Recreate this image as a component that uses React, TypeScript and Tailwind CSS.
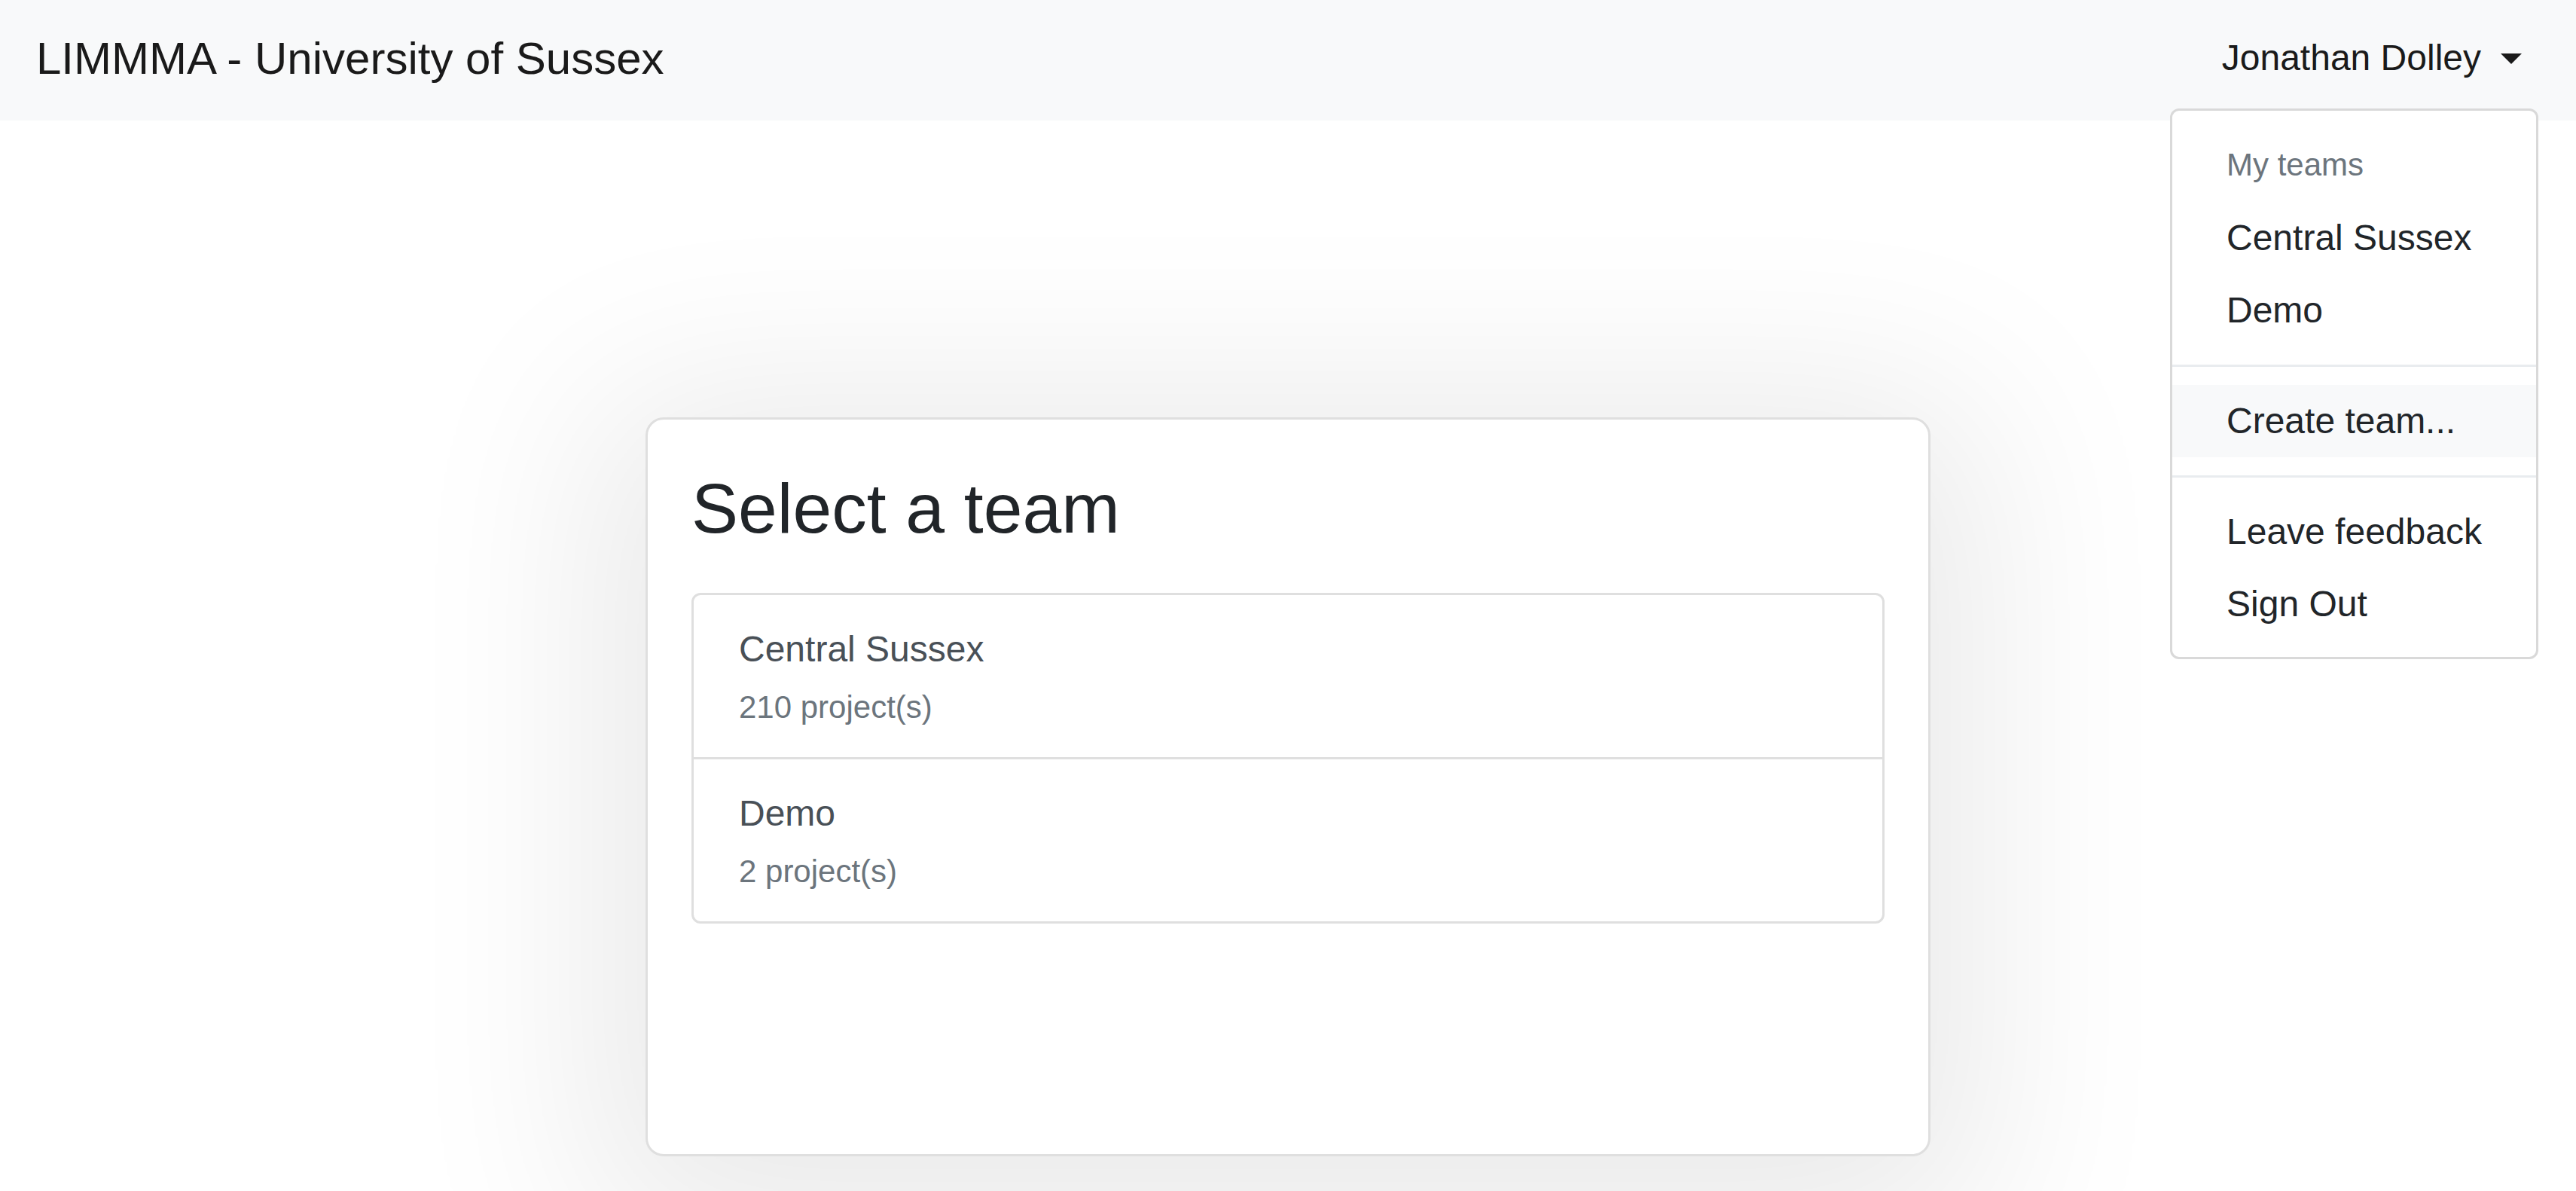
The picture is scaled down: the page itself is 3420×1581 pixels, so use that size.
import React from "react";

const teams = [
  { name: "Central Sussex", projects: 210 },
  { name: "Demo", projects: 2 },
];

function Caret() {
  return (
    <span className="inline-block w-0 h-0 border-x-[14px] border-x-transparent border-t-[14px] border-t-[#1a1a1a] ml-[26px] mt-[2px]" />
  );
}

function DropdownMenu() {
  return (
    <div className="absolute top-[144px] right-[50px] w-[489px] bg-white border-[3px] border-[#d9d9d9] rounded-[12px] py-[22px] z-10">
      <div className="px-[72px] py-[24px] text-[42px] leading-[51px] text-[#6c757d]">My teams</div>
      <div className="h-[96px] flex items-center px-[72px] text-[48px] text-[#212529]">Central Sussex</div>
      <div className="h-[96px] flex items-center px-[72px] text-[48px] text-[#212529]">Demo</div>
      <div className="h-[3px] bg-[#e9ecef] my-[24px]" />
      <div className="h-[96px] flex items-center px-[72px] text-[48px] text-[#212529] bg-[#f8f9fa]">Create team...</div>
      <div className="h-[3px] bg-[#e9ecef] my-[24px]" />
      <div className="h-[96px] flex items-center px-[72px] text-[48px] text-[#212529]">Leave feedback</div>
      <div className="h-[96px] flex items-center px-[72px] text-[48px] text-[#212529]">Sign Out</div>
    </div>
  );
}

export default function App() {
  return (
    <div
      className="relative min-h-screen bg-white overflow-hidden"
      style={{ fontFamily: '"Liberation Sans", Arial, Helvetica, sans-serif' }}
    >
      <nav className="relative z-[1] h-[160px] bg-[#f8f9fa] flex items-center justify-between px-[48px]">
        <div className="text-[60px] leading-[90px] text-[#1a1a1a] -mt-[4px]">LIMMMA - University of Sussex</div>
        <div className="flex items-center px-[24px] text-[48px] leading-[72px] text-[#1a1a1a] -mt-[6px]">
          <span>Jonathan Dolley</span>
          <Caret />
        </div>
      </nav>
      <DropdownMenu />

      <main className="pt-[394px]">
        <div className="mx-auto w-[1706px] h-[981px] bg-white border-[3px] border-[#dfdfdf] rounded-[24px] shadow-[0_40px_300px_70px_rgba(0,0,0,0.085)] px-[58px] pt-[60px]">
          <h2 className="text-[93px] leading-[116px] font-medium text-[#212529] mb-[54px]">Select a team</h2>
          <div className="border-[3px] border-[#dfdfdf] rounded-[12px] flex flex-col">
            {teams.map((t, i) => (
              <div
                key={t.name}
                className={
                  "h-[215px] px-[60px] pt-[36px] flex flex-col " + (i > 0 ? "border-t-[3px] border-[#dfdfdf] h-[218px]" : "")
                }
              >
                <div className="text-[48px] leading-[72px] text-[#495057] mb-[9px]">{t.name}</div>
                <div className="text-[42px] leading-[63px] text-[#6c757d]">{t.projects} project(s)</div>
              </div>
            ))}
          </div>
        </div>
      </main>
    </div>
  );
}
